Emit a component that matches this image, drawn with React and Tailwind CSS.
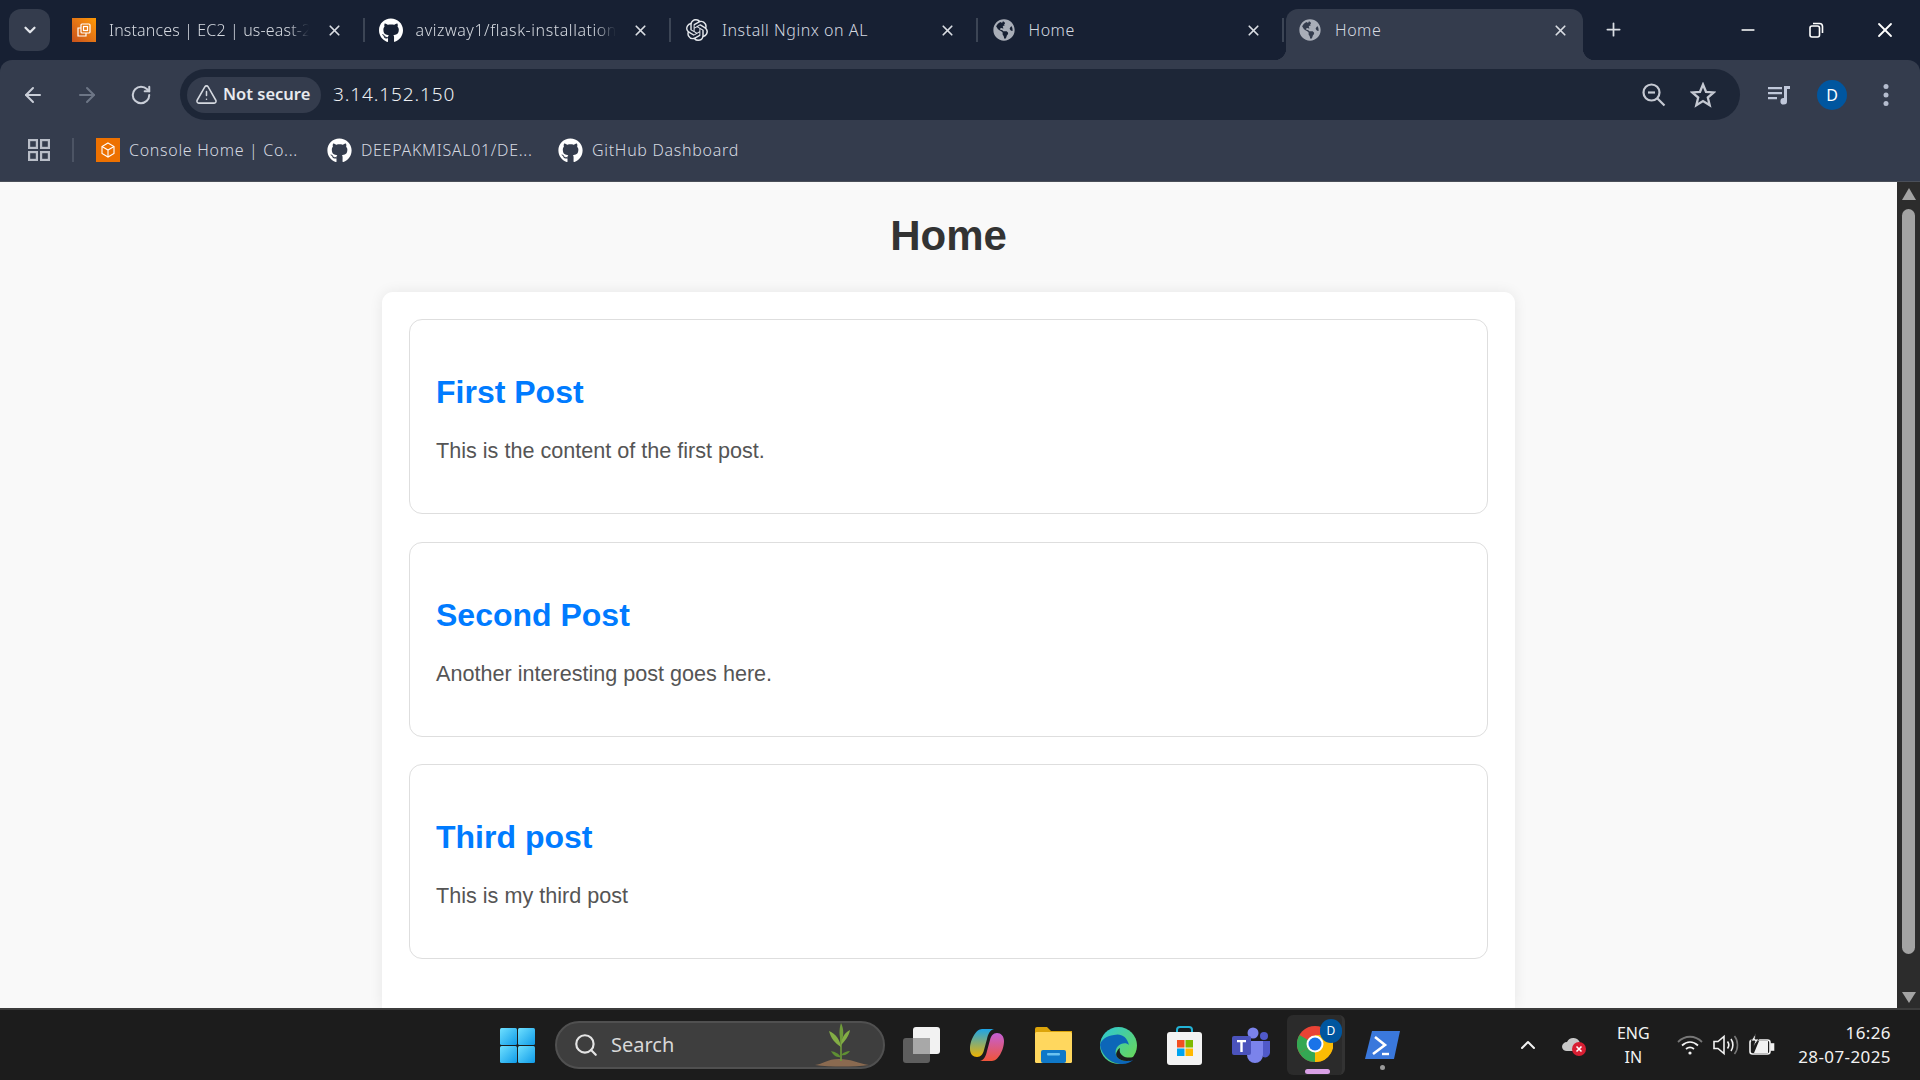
import { ArrowLeft, ArrowRight, RotateCw, ChevronDown, ChevronUp, X, Plus, Minus, TriangleAlert, Search } from 'lucide-react';
import { FaGithub, FaGlobeAmericas } from 'react-icons/fa';
import { SiOpenai } from 'react-icons/si';

const uiFont = "font-['Noto_Sans',sans-serif]";

function Ec2Icon() {
    return (
        <div className="w-6 h-6 shrink-0 bg-gradient-to-tr from-[#c8511b] to-[#ff9900] flex items-center justify-center">
            <svg width="18" height="18" viewBox="0 0 18 18" fill="none" stroke="#fff" strokeWidth="1.2">
                <rect x="6" y="3" width="9" height="9" rx="1" />
                <rect x="8.5" y="5.5" width="4" height="4" />
                <path d="M6 7H3v8h8v-3" />
            </svg>
        </div>
    );
}

function BoxIcon() {
    return (
        <div className="w-6 h-6 shrink-0 bg-[#ed7100] flex items-center justify-center">
            <svg width="18" height="18" viewBox="0 0 18 18" fill="none" stroke="#fff" strokeWidth="1.1">
                <path d="M9 2l6 3.5v7L9 16l-6-3.5v-7z" />
                <path d="M3 5.5L9 9l6-3.5M9 9v7" />
            </svg>
        </div>
    );
}

function Tab({ icon, title, active, last, fade, tight }) {
    return (
        <div className="w-[306.5px] h-[51px] shrink-0 flex items-center">
            <div className={`relative w-[297px] ml-[2px] h-full flex items-center pl-3 pr-[14px] pb-[9px] rounded-t-[12px] ${active ? 'bg-[#343c4d]' : ''}`}>
                {active && <div className="absolute -left-3 bottom-0 w-3 h-3 bg-[radial-gradient(circle_at_0_0,#172033_12px,#343c4d_12.5px)]" />}
                {active && <div className="absolute -right-3 bottom-0 w-3 h-3 bg-[radial-gradient(circle_at_100%_0,#172033_12px,#343c4d_12.5px)]" />}
                <div className="w-6 h-6 flex items-center justify-center shrink-0">{icon}</div>
                <div className={`ml-[13px] w-[204px] overflow-hidden whitespace-nowrap text-[16px] font-light text-[#d5d9e0] ${tight ? 'tracking-[0.15px]' : 'tracking-[0.55px]'} ${fade ? '[mask-image:linear-gradient(to_right,black_88%,transparent_98%)]' : ''}`}>
                    {title}
                </div>
                <X size={17} strokeWidth={2.4} className="ml-auto text-[#d9dde3] shrink-0" />
            </div>
            {!last && <div className={`ml-[6px] mb-[9px] w-[2px] h-6 ${active ? '' : 'bg-[#3c4555]'}`} />}
        </div>
    );
}

function Bookmark({ icon, title, className }) {
    return (
        <div className={`flex items-center gap-[9px] ${className}`}>
            {icon}
            <span className="text-[16px] font-light tracking-[0.7px] text-[#d5d9e0] whitespace-nowrap">{title}</span>
        </div>
    );
}

function Chrome() {
    return (
        <div className="h-[60px] shrink-0 bg-[#172033] flex flex-col">
            <div className="h-[60px] flex items-end">
                <div className="ml-[9px] mb-[9px] w-[41px] h-[42px] rounded-[12px] bg-[#343c4d] flex items-center justify-center">
                    <ChevronDown size={18} strokeWidth={3} className="text-[#e3e6eb]" />
                </div>
                <div className="ml-2 flex">
                    <Tab icon={<Ec2Icon />} title="Instances | EC2 | us-east-2" fade tight />
                    <Tab icon={<FaGithub size={25} className="text-white" />} title="avizway1/flask-installation" fade />
                    <Tab icon={<SiOpenai size={22} className="text-[#e3e6eb]" />} title="Install Nginx on AL" />
                    <Tab icon={<FaGlobeAmericas size={22} className="text-[#a9aeb8]" />} title="Home" />
                    <Tab icon={<FaGlobeAmericas size={22} className="text-[#a9aeb8]" />} title="Home" active last />
                </div>
                <Plus size={21} strokeWidth={2} className="ml-[12px] mb-[20px] text-[#d9dde3]" />
                <Minus size={20} strokeWidth={2} className="ml-[114px] mb-[20px] text-white" />
                <svg width="16" height="16" viewBox="0 0 16 16" fill="none" stroke="#fff" strokeWidth="1.6" className="ml-[50px] mb-[22px]">
                    <rect x="2" y="4" width="9.5" height="11" rx="2" />
                    <path d="M5 1.5h6.5a3 3 0 0 1 3 3V11" />
                </svg>
                <X size={24} strokeWidth={1.8} className="ml-[49px] mb-[18px] text-white" />
            </div>
        </div>
    );
}

function Toolbar() {
    return (
        <div className="h-[60px] shrink-0 bg-[#343c4d] rounded-t-[12px] flex items-end">
            <ArrowLeft size={24} strokeWidth={2} className="ml-[21px] mb-[13px] text-[#c9ced8]" />
            <ArrowRight size={24} strokeWidth={2} className="ml-[30px] mb-[13px] text-[#6d7686]" />
            <RotateCw size={22} strokeWidth={2.2} className="ml-[31px] mb-[14px] text-[#c9ced8]" />
            <div className="ml-[28px] w-[1560px] h-[51px] rounded-full bg-[#1d2637] flex items-center pl-[7px] pr-[24px]">
                <div className="w-[134px] h-9 rounded-full bg-[#343c4d] flex items-center pl-2 gap-[5px]">
                    <TriangleAlert size={23} strokeWidth={1.6} className="text-[#d5d9e0]" />
                    <span className="text-[16.5px] font-semibold text-[#e8eaee] tracking-[0px] whitespace-nowrap">Not secure</span>
                </div>
                <span className="ml-3 text-[19px] font-light tracking-[0.9px] text-[#eef0f3]">3.14.152.150</span>
                <svg width="24" height="24" viewBox="0 0 24 24" fill="none" stroke="#c5c9d2" strokeWidth="2.2" className="ml-auto">
                    <circle cx="9.500" cy="9.500" r="8" />
                    <path d="M15.500 15.500L22.500 22.500" />
                    <path d="M6 9.500h7" />
                </svg>
                <svg width="26" height="26" viewBox="0 0 26 26" fill="none" stroke="#c5c9d2" strokeWidth="2.300" strokeLinejoin="miter" className="ml-[24px]">
                    <path d="M13 2.500l3 7.300 7.800.6-6 5.100 1.900 7.700L13 19l-6.700 4.200 1.900-7.700-6-5.100 7.800-.6z" />
                </svg>
            </div>
            <div className="flex items-center h-[51px]">
                <svg width="24" height="24" viewBox="0 0 24 24" className="ml-[27px] text-[#c0c8da]" fill="currentColor">
                    <path d="M1 4h14v2.300H1zM1 9h14v2.300H1zM1 14h9v2.300H1z" />
                    <path d="M17 3h6v3h-3v12a3.300 3.300 0 1 1-3-3z" />
                </svg>
                <div className="ml-[26px] w-[30px] h-[30px] rounded-full bg-[#00569f] flex items-center justify-center text-[16px] text-white">D</div>
                <svg width="6" height="24" viewBox="0 0 6 24" fill="#b5bdcf" className="ml-[36px]">
                    <circle cx="3" cy="3.500" r="2.500" />
                    <circle cx="3" cy="12" r="2.500" />
                    <circle cx="3" cy="20.500" r="2.500" />
                </svg>
            </div>
        </div>
    );
}

function BookmarksBar() {
    return (
        <div className="h-[62px] shrink-0 bg-[#343c4d] border-b border-[#4a4f59] pb-[1px] flex items-center">
            <svg width="22" height="22" viewBox="0 0 22 22" fill="none" stroke="#b9bec8" strokeWidth="2.2" className="ml-[28px]">
                <rect x="1.1" y="1.1" width="7.8" height="7.8" />
                <rect x="13.1" y="1.1" width="7.8" height="7.8" />
                <rect x="1.1" y="13.1" width="7.8" height="7.8" />
                <rect x="13.1" y="13.1" width="7.8" height="7.8" />
            </svg>
            <div className="ml-[22px] w-[2px] h-6 bg-[#4c5464]" />
            <Bookmark icon={<BoxIcon />} title="Console Home | Co..." className="ml-[22px] w-[231px]" />
            <Bookmark icon={<FaGithub size={25} className="text-white" />} title="DEEPAKMISAL01/DE..." className="w-[231px]" />
            <Bookmark icon={<FaGithub size={25} className="text-white" />} title="GitHub Dashboard" />
        </div>
    );
}

const posts = [
    { title: 'First Post', body: 'This is the content of the first post.' },
    { title: 'Second Post', body: 'Another interesting post goes here.' },
    { title: 'Third post', body: 'This is my third post' },
];

function Page() {
    return (
        <div className="flex-1 min-h-0 flex bg-[#f9f9f9] overflow-hidden">
            <div className="flex-1 min-w-0 flex flex-col items-center font-['Liberation_Sans',sans-serif]">
                <h1 className="mt-[29px] text-[42px] leading-[50px] font-bold text-[#333]">Home</h1>
                <div className="mt-[31px] w-[1133px] grow bg-white rounded-t-[11px] shadow-[0_0_14px_rgba(0,0,0,0.08)] px-[27px] pt-[27px] flex flex-col gap-[27.5px]">
                    {posts.map((post) => (
                        <div key={post.title} className="h-[195px] border-[1.5px] border-[#dedede] rounded-[13px] px-[26px] pt-[53px]">
                            <h2 className="text-[32px] leading-[38px] font-bold text-[#007bff]">{post.title}</h2>
                            <p className="mt-[27px] text-[21.6px] leading-[25px] text-[#555]">{post.body}</p>
                        </div>
                    ))}
                </div>
            </div>
            {/* dark scrollbar */}
            <div className="w-[23px] shrink-0 bg-[#2c2c2c] flex flex-col items-center">
                <div className="w-0 h-0 mt-[6px] border-x-[7.5px] border-x-transparent border-b-[12px] border-b-[#a3a3a3]" />
                <div className="mt-[9px] w-[13px] h-[745px] rounded-full bg-[#a3a3a3]" />
                <div className="w-0 h-0 mt-auto mb-[5px] border-x-[7.5px] border-x-transparent border-t-[11px] border-t-[#a3a3a3]" />
            </div>
        </div>
    );
}

function WindowsLogo() {
    return (
        <svg width="35" height="35" viewBox="0 0 35 35" className="ml-[500px] shrink-0">
            <defs>
                <linearGradient id="winA" x1="0" y1="0" x2="1" y2="1">
                    <stop offset="0" stopColor="#6fe0ff" />
                    <stop offset="1" stopColor="#0f9be8" />
                </linearGradient>
            </defs>
            <rect x="0" y="0" width="17" height="17" rx="1.5" fill="url(#winA)" />
            <rect x="18" y="0" width="17" height="17" rx="1.5" fill="url(#winA)" />
            <rect x="0" y="18" width="17" height="17" rx="1.5" fill="url(#winA)" />
            <rect x="18" y="18" width="17" height="17" rx="1.5" fill="url(#winA)" />
        </svg>
    );
}

function Plant() {
    return (
        <svg width="58" height="48" viewBox="0 0 58 48" className="shrink-0">
            <path d="M2 44c8-1 12-6 24-6s18 4 30 6c-16 2-38 2-54 0z" fill="#8a6a50" />
            <path d="M28 40V8" stroke="#6f9b3a" strokeWidth="1.6" />
            <path d="M28 22C26 14 26 8 28 2c3 6 3 13 0 20z" fill="#6f9b3a" />
            <path d="M28 26C22 22 18 18 16 10c7 3 11 9 12 16z" fill="#83ad45" />
            <path d="M28 24c4-4 8-9 9-15-6 3-9 9-9 15z" fill="#83ad45" />
            <path d="M28 36c-3-4-6-5-10-6 2 4 6 7 10 6z" fill="#5f8f33" />
            <path d="M28 34c3-3 6-4 9-4-2 3-5 5-9 4z" fill="#5f8f33" />
        </svg>
    );
}

function TaskView() {
    return (
        <svg width="37" height="36" viewBox="0 0 37 36" className="ml-[18px] shrink-0">
            <rect x="0" y="11" width="27" height="25" rx="3" fill="#5e5e5e" />
            <rect x="10" y="0" width="27" height="27" rx="3" fill="#f2f2f2" />
            <rect x="10" y="11" width="17" height="16" fill="#a8a8a8" />
        </svg>
    );
}

function Copilot() {
    return (
        <svg width="34" height="34" viewBox="0 0 34 34" className="ml-[30px] shrink-0">
            <defs>
                <linearGradient id="copA" x1="0" y1="0" x2="0" y2="1">
                    <stop offset="0" stopColor="#1ca5e8" />
                    <stop offset="1" stopColor="#f0b400" />
                </linearGradient>
                <linearGradient id="copB" x1="0" y1="0" x2="0" y2="1">
                    <stop offset="0" stopColor="#c35fd6" />
                    <stop offset="1" stopColor="#f0553a" />
                </linearGradient>
            </defs>
            <path d="M12 1h12c-4 1-6 5-7 10l-3 11c-1 4-3 7-7 7-4 0-7-3-7-8C0 12 6 1 12 1z" fill="url(#copA)" />
            <path d="M22 33H10c4-1 6-5 7-10l3-11c1-4 3-7 7-7 4 0 7 3 7 8 0 9-6 20-12 20z" fill="url(#copB)" />
        </svg>
    );
}

function Explorer() {
    return (
        <svg width="37" height="36" viewBox="0 0 37 36" className="ml-[31px] shrink-0">
            <path d="M0 2a2 2 0 0 1 2-2h10l4 4h21v8H0z" fill="#dca40a" />
            <rect x="0" y="5" width="37" height="31" rx="1.5" fill="#ffd75e" />
            <rect x="6" y="23" width="25" height="13" rx="2" fill="#0f78c8" />
            <rect x="12" y="26" width="13" height="2.5" rx="1" fill="#6cc3f0" />
        </svg>
    );
}

function Edge() {
    return (
        <svg width="37" height="37" viewBox="0 0 37 37" className="ml-[28px] shrink-0">
            <defs>
                <linearGradient id="edgeA" x1="0" y1="0" x2="1" y2="1">
                    <stop offset="0" stopColor="#2bc6d9" />
                    <stop offset="1" stopColor="#6fd94a" />
                </linearGradient>
            </defs>
            <circle cx="18.5" cy="18.5" r="18.5" fill="url(#edgeA)" />
            <path d="M0 18C2 30 12 37 22 37c5 0 9-2 11-4-6 2-13 1-16-3-3-5-1-11 4-13 3-1 6-1 8 1C27 9 20 6 14 8 6 9 1 13 0 18z" fill="#0c66b8" />
            <path d="M17 30c3 4 10 5 16 3 1-1 2-2 3-4-4 2-10 2-13 0-3-2-4-5-3-8-3 2-5 6-3 9z" fill="#1c1c1c" />
        </svg>
    );
}

function Store() {
    return (
        <svg width="35" height="39" viewBox="0 0 35 39" className="ml-[30px] shrink-0">
            <path d="M10 8V4a3 3 0 0 1 3-3h9a3 3 0 0 1 3 3v4" fill="none" stroke="#22b3d6" strokeWidth="2" />
            <rect x="0" y="6" width="35" height="33" rx="3" fill="#f3f3f3" />
            <rect x="10" y="14" width="7.5" height="7.5" fill="#f25022" />
            <rect x="18.5" y="14" width="7.5" height="7.5" fill="#7fba00" />
            <rect x="10" y="22.5" width="7.5" height="7.5" fill="#00a4ef" />
            <rect x="18.5" y="22.5" width="7.5" height="7.5" fill="#ffb900" />
        </svg>
    );
}

function Teams() {
    return (
        <svg width="38" height="36" viewBox="0 0 38 36" className="ml-[30px] shrink-0">
            <circle cx="21" cy="6" r="5.5" fill="#7b83eb" />
            <circle cx="32" cy="9" r="4" fill="#5059c9" />
            <path d="M26 14h12v12a5 5 0 0 1-7 4z" fill="#5059c9" />
            <path d="M11 14h20v14a8 8 0 0 1-16 0z" fill="#7b83eb" />
            <rect x="0" y="9" width="19" height="19" rx="2" fill="#4b53bc" />
            <path d="M5 13h9v2.2h-3.3V25H8.3v-9.8H5z" fill="#fff" />
        </svg>
    );
}

function ChromeApp() {
    return (
        <div className="relative ml-[17px] w-[58px] h-[60px] shrink-0 rounded-[6px] bg-[#2b2b2b] border-r-[3px] border-[#333] flex flex-col items-center">
            <svg width="36" height="36" viewBox="0 0 36 36" className="mt-[11px]">
                <circle cx="18" cy="18" r="18" fill="#ea4335" />
                <path d="M18 18L2.4 27A18 18 0 0 0 18 36l3-3z" fill="#34a853" />
                <path d="M18 36A18 18 0 0 0 34 9H18z" fill="#fbbc04" />
                <path d="M18 18L2.4 27A18 18 0 0 1 2.4 9z" fill="#34a853" />
                <circle cx="18" cy="18" r="8.5" fill="#fff" />
                <circle cx="18" cy="18" r="6.5" fill="#1a73e8" />
            </svg>
            <div className="absolute right-[0px] top-[4px] w-[22px] h-[24px] rounded-full bg-[#00569f] text-white text-[12px] flex items-center justify-center">D</div>
            <div className="absolute bottom-[1px] left-[18px] w-[25px] h-[5px] rounded-full bg-[#d9a0e6]" />
        </div>
    );
}

function PowerShell() {
    return (
        <div className="relative ml-[20px] w-[35px] shrink-0">
            <svg width="35" height="28" viewBox="0 0 35 28">
                <path d="M7 0h28l-6 28H0z" fill="#3a78dc" />
                <path d="M10 6l10 8-12 9" stroke="#fff" strokeWidth="2.6" fill="none" />
                <path d="M17 23h7" stroke="#fff" strokeWidth="2.4" />
            </svg>
            <div className="absolute left-[15px] top-[34px] w-[5px] h-[5px] rounded-full bg-[#9a9a9a]" />
        </div>
    );
}

function Tray() {
    return (
        <div className="ml-auto flex items-center pr-[29px] text-[#f2f2f2] text-[16px] leading-[24px]">
            <ChevronUp size={24} strokeWidth={2} />
            <svg width="26" height="24" viewBox="0 0 26 24" className="ml-[21px]">
                <path d="M1 14a5 5 0 0 1 5-5 7 7 0 0 1 13 1 5 5 0 0 1 0 8H6a5 5 0 0 1-5-4z" fill="#c9c9c9" />
                <circle cx="18" cy="16" r="7" fill="#d81f33" />
                <path d="M15.5 13.5l5 5m0-5l-5 5" stroke="#fff" strokeWidth="1.6" />
            </svg>
            <div className="ml-[24px] w-[44px] text-center">
                <div>ENG</div>
                <div>IN</div>
            </div>
            <svg width="26" height="22" viewBox="0 0 26 22" fill="none" stroke="#f2f2f2" strokeWidth="1.8" className="ml-[22px]">
                <path d="M1 8c7-7 17-7 24 0" stroke="#777" />
                <path d="M5 11.5c5-4.5 11-4.5 16 0" />
                <path d="M9 15c2.5-2 5.5-2 8 0" />
                <circle cx="13" cy="19" r="1.6" fill="#f2f2f2" stroke="none" />
            </svg>
            <svg width="26" height="24" viewBox="0 0 26 24" fill="none" stroke="#f2f2f2" strokeWidth="1.6" className="ml-[10px]">
                <path d="M1 8.5v7h4l6 5V3.5l-6 5z" />
                <path d="M14.5 8.5c1.5 2 1.5 5 0 7M18 6c2.5 3.5 2.5 8.5 0 12" />
                <path d="M21.5 3c4 5 4 13 0 18" stroke="#777" />
            </svg>
            <svg width="26" height="24" viewBox="0 0 26 24" fill="none" stroke="#f2f2f2" strokeWidth="1.6" className="ml-[10px]">
                <rect x="1" y="7" width="20" height="14" rx="2.5" />
                <rect x="22" y="11" width="2.5" height="6" fill="#f2f2f2" />
                <path d="M5 20l5-12h9v12z" fill="#f2f2f2" stroke="none" />
                <path d="M7 0L2 8h4l-2 6 6-8H6z" fill="#f2f2f2" stroke="#1c1c1c" strokeWidth="0.8" />
            </svg>
            <div className="ml-[23px] text-right text-[17px] tracking-[0.4px]">
                <div>16:26</div>
                <div>28-07-2025</div>
            </div>
        </div>
    );
}

function Taskbar() {
    return (
        <div className={`h-[72px] shrink-0 bg-[#1c1c1c] border-t-2 border-[#3c3c3c] flex items-center ${uiFont}`}>
            <WindowsLogo />
            <div className="ml-[20px] w-[330px] h-[48px] rounded-full bg-[#3e3e3e] border-2 border-[#505050] flex items-center pl-[16px] pr-[12px] shrink-0">
                <Search size={26} strokeWidth={2} className="text-[#e4e4e4]" />
                <span className="ml-[12px] text-[20px] text-[#d8d8d8]">Search</span>
                <div className="ml-auto"><Plant /></div>
            </div>
            <TaskView />
            <Copilot />
            <Explorer />
            <Edge />
            <Store />
            <Teams />
            <ChromeApp />
            <PowerShell />
            <Tray />
        </div>
    );
}

export default function App() {
    return (
        <main className="w-[1920px] h-[1080px] flex flex-col overflow-hidden bg-[#172033]">
            <div className={uiFont}>
                <Chrome />
                <Toolbar />
                <BookmarksBar />
            </div>
            <Page />
            <Taskbar />
        </main>
    );
}
